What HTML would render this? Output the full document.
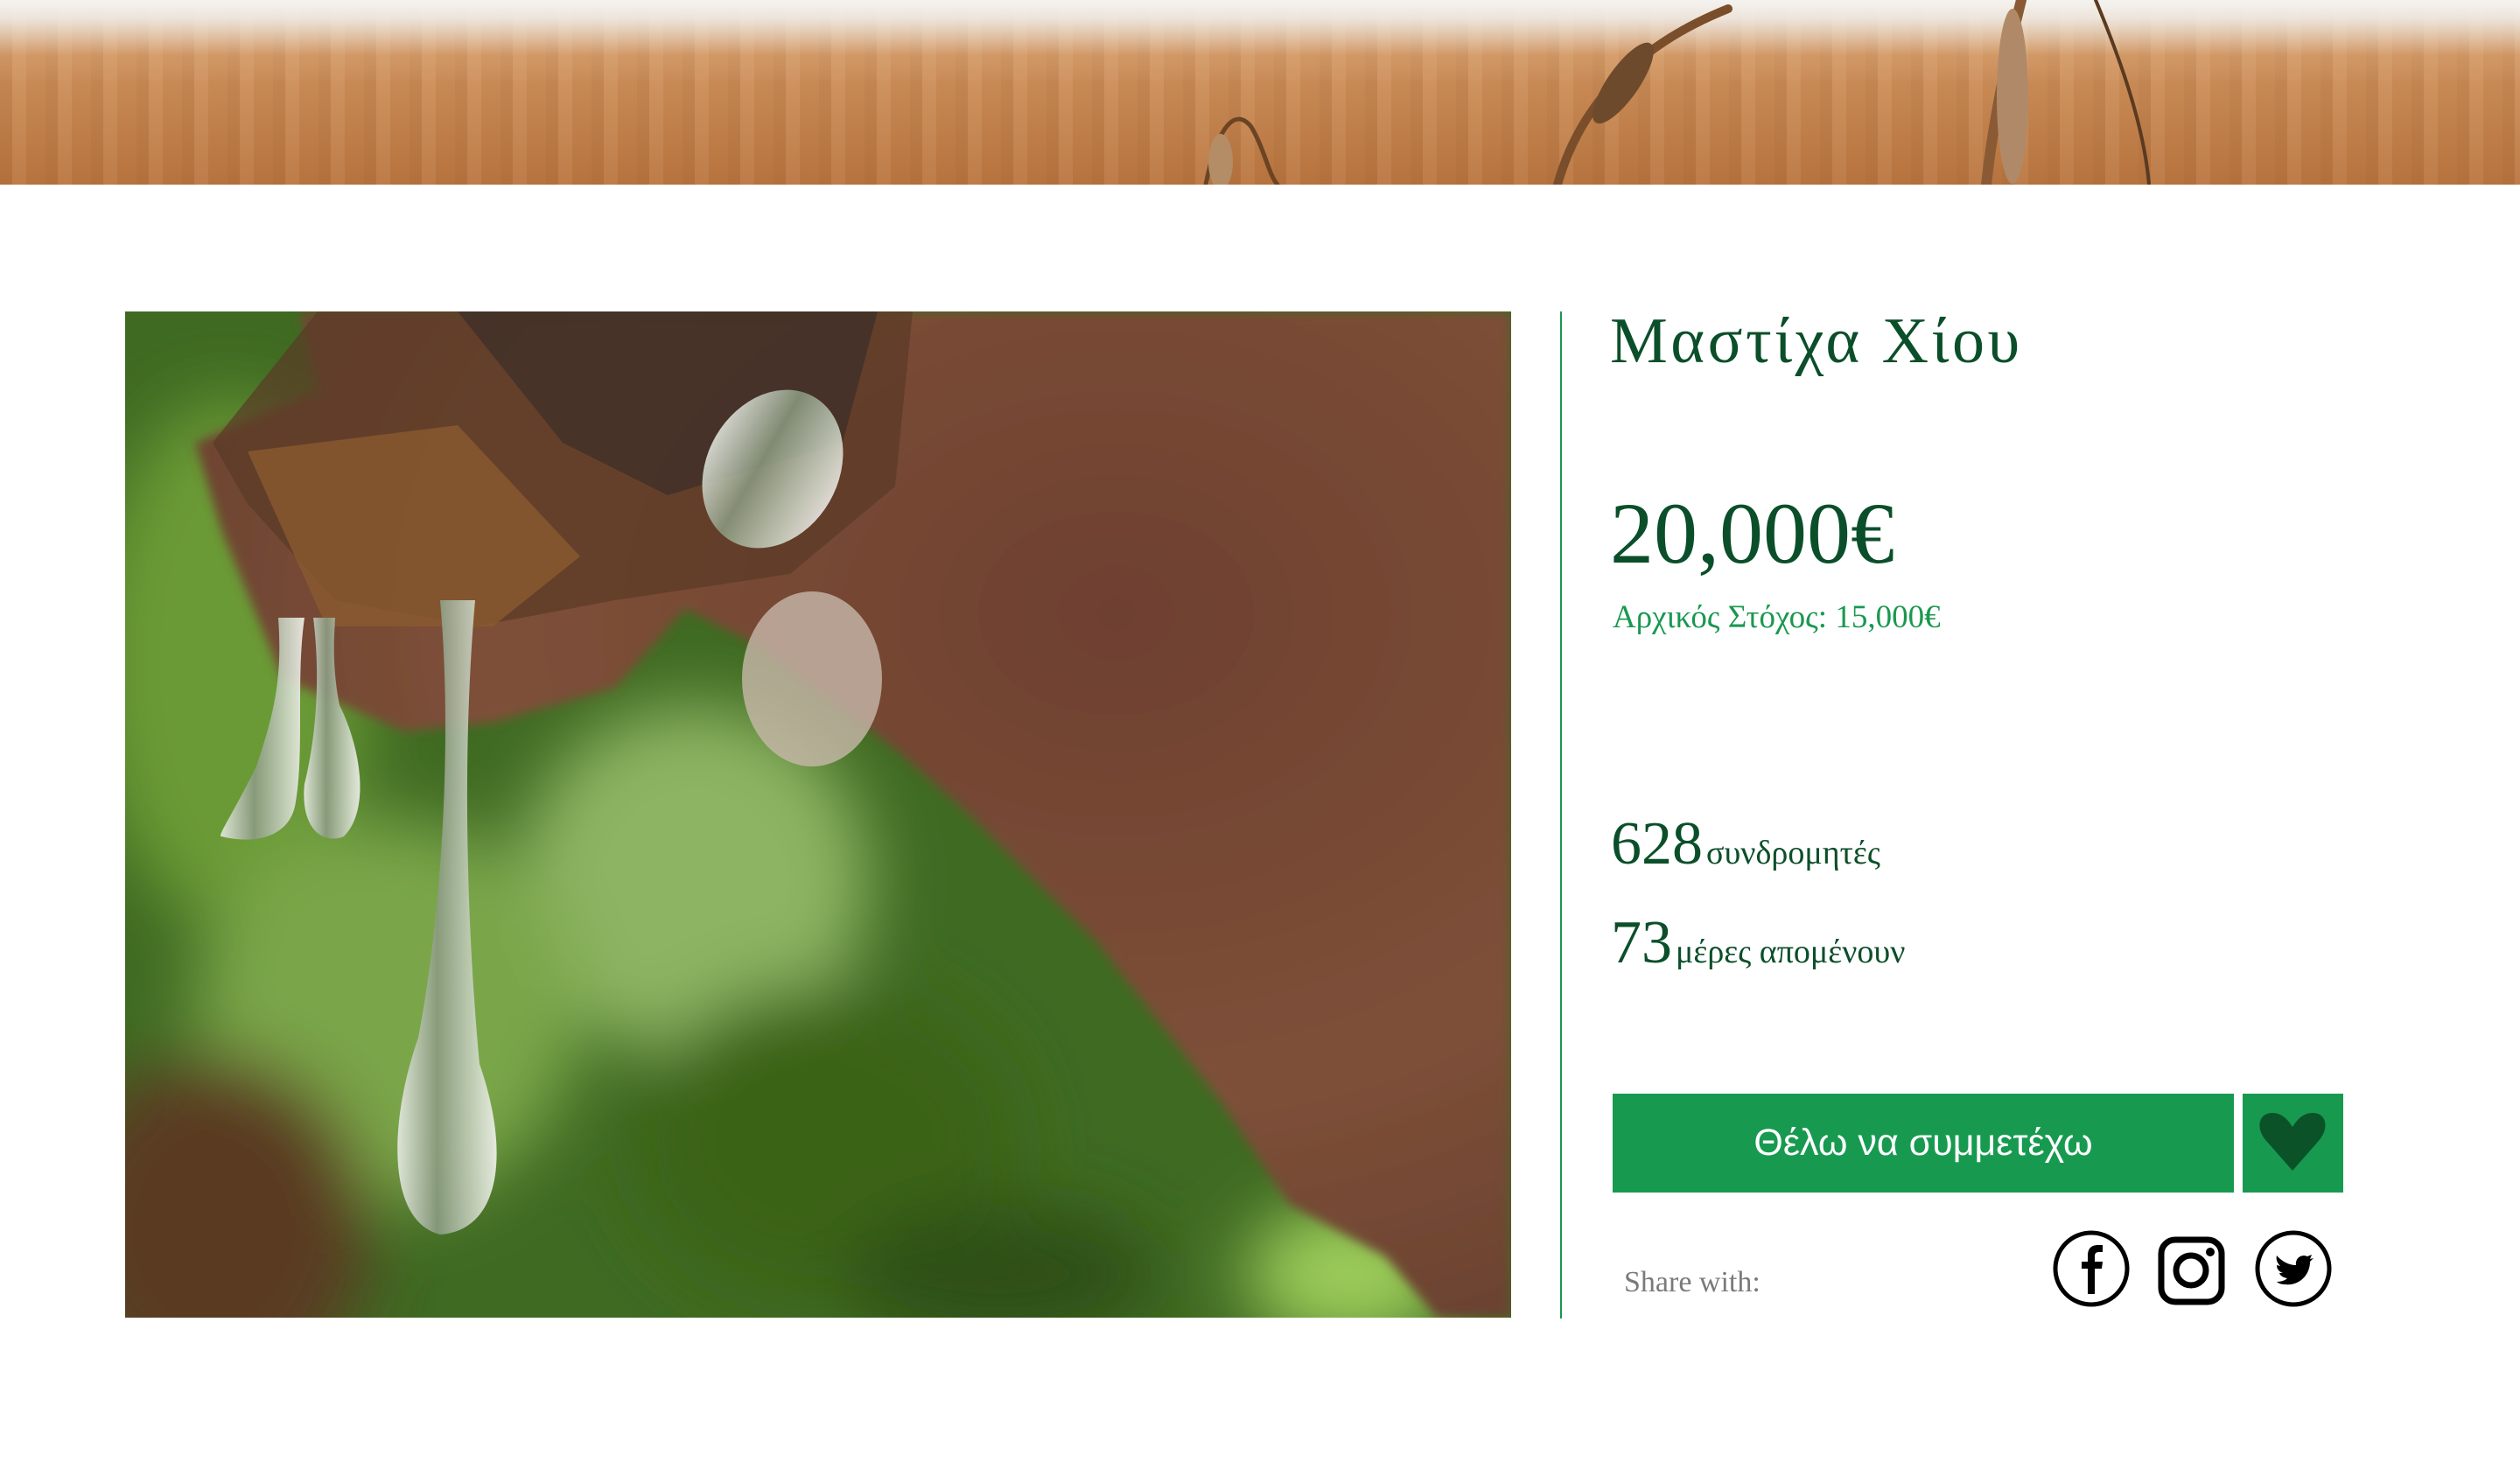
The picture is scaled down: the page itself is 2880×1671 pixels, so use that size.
<!DOCTYPE html>
<html><head><meta charset="utf-8">
<style>
html,body{margin:0;padding:0;background:#fff;}
body{width:2880px;height:1671px;position:relative;overflow:hidden;font-family:"Liberation Serif",serif;}
.abs{position:absolute;}
#wheat{left:0;top:0;width:2880px;height:211px;
background:
 linear-gradient(180deg,rgba(245,243,240,1) 0%,rgba(240,236,230,0.9) 10%,rgba(220,170,120,0.3) 30%,rgba(0,0,0,0) 45%),
 repeating-linear-gradient(90deg,rgba(120,70,30,0.10) 0 14px,rgba(255,230,200,0.07) 14px 30px,rgba(150,90,40,0.06) 30px 52px),
 linear-gradient(180deg,#d9a373 0%,#c98a55 50%,#b8743f 100%);}
.line{left:1783px;top:356px;width:2px;height:1151px;background:#1a9850;}
.t{color:#0b4f2a;white-space:nowrap;}
</style></head><body>
<div id="wheat" class="abs">
<svg width="2880" height="211" style="position:absolute;left:0;top:0">
<g stroke="#6b4424" fill="none" stroke-linecap="round">
<path d="M1378 211 C1390 150 1410 120 1430 145 C1445 170 1450 200 1460 211" stroke-width="5"/>
<path d="M1780 211 C1800 140 1850 60 1975 10" stroke-width="10" stroke="#7a4e2a"/>
<path d="M2270 211 C2280 120 2300 40 2310 0" stroke-width="12" stroke="#8a5a34"/>
<path d="M2395 0 C2420 60 2450 140 2456 211" stroke-width="4" stroke="#5a3a20"/>
</g>
<ellipse cx="1395" cy="185" rx="14" ry="32" fill="#b48c66"/>
<ellipse cx="1855" cy="95" rx="18" ry="55" fill="#6e4a2c" transform="rotate(35 1855 95)"/>
<ellipse cx="2300" cy="110" rx="18" ry="100" fill="#b08a68"/>
</svg>
</div>

<div class="abs" style="left:143px;top:356px;width:1584px;height:1150px;overflow:hidden;">
<svg width="1584" height="1150" viewBox="0 0 1584 1150" preserveAspectRatio="none">
<defs>
<filter id="b1"><feGaussianBlur stdDeviation="40"/></filter>
<filter id="b2"><feGaussianBlur stdDeviation="6"/></filter>
<radialGradient id="bark" cx="0.7" cy="0.3" r="0.8">
<stop offset="0" stop-color="#6e4030"/><stop offset="0.6" stop-color="#7e5038"/><stop offset="1" stop-color="#684030"/></radialGradient>
<linearGradient id="drop" x1="0" y1="0" x2="1" y2="0">
<stop offset="0" stop-color="#e8ece4"/><stop offset="0.4" stop-color="#8a9a80"/><stop offset="0.8" stop-color="#cfd8c8"/><stop offset="1" stop-color="#f2f2ee"/></linearGradient>
</defs>
<rect width="1584" height="1150" fill="#3f6a22"/>
<g filter="url(#b1)">
<ellipse cx="120" cy="400" rx="160" ry="300" fill="#6a9a36"/>
<ellipse cx="650" cy="650" rx="200" ry="200" fill="#8cb462"/>
<ellipse cx="300" cy="800" rx="220" ry="220" fill="#7aa64a"/>
<ellipse cx="100" cy="1050" rx="180" ry="200" fill="#5a3a22"/>
<ellipse cx="800" cy="950" rx="220" ry="180" fill="#3a6418"/>
<ellipse cx="1400" cy="1100" rx="120" ry="80" fill="#9ccc5a"/>
<ellipse cx="1000" cy="1100" rx="180" ry="80" fill="#2f5012"/>
</g>
<path d="M200 0 L1584 0 L1584 1150 L1500 1150 L1440 1080 L1330 1020 L1250 900 L1110 720 L960 570 L880 500 L720 380 L640 340 L560 430 L420 470 L320 480 L180 420 L110 250 L80 150 L220 90 Z" fill="url(#bark)" filter="url(#b2)"/>
<path d="M220 0 L900 0 L880 200 L760 300 L560 330 L400 360 L240 330 L140 220 L100 150 Z" fill="#5a3a26" opacity="0.7"/>
<path d="M380 0 L860 0 L820 150 L620 210 L500 150 Z" fill="#3a2e28" opacity="0.7"/>
<path d="M140 160 L380 130 L520 280 L420 360 L230 360 Z" fill="#8a5a30" opacity="0.8"/>
<ellipse cx="740" cy="180" rx="75" ry="95" fill="url(#drop)" opacity="0.85" transform="rotate(30 740 180)"/>
<ellipse cx="785" cy="420" rx="80" ry="100" fill="#c8b8aa" opacity="0.8"/>
<path d="M175 350 C180 420 170 460 150 520 C120 580 105 600 110 600 C150 610 190 600 195 560 C205 500 195 420 205 350 Z" fill="url(#drop)" opacity="0.9"/>
<path d="M215 350 C225 430 215 500 205 540 C200 590 225 610 250 600 C280 570 270 500 245 450 C235 400 240 360 240 350 Z" fill="url(#drop)" opacity="0.9"/>
<path d="M360 330 C375 500 360 700 335 830 C300 930 300 1040 360 1055 C430 1050 440 960 405 860 C390 700 385 500 400 330 Z" fill="url(#drop)" opacity="0.9"/>
</svg>
</div>

<div class="abs line"></div>

<div class="abs t" style="left:1840px;top:340px;font-size:74px;line-height:100px;letter-spacing:3.5px;">Μαστίχα Χίου</div>
<div class="abs t" style="left:1840px;top:550px;font-size:100px;line-height:120px;">20,000€</div>
<div class="abs" style="left:1843px;top:684px;font-size:37px;line-height:44px;color:#1a9850;white-space:nowrap;">Αρχικός Στόχος: 15,000€</div>
<div class="abs t" style="left:1841px;top:920px;line-height:90px;"><span style="font-size:70px;">628</span> <span style="font-size:38px;">συνδρομητές</span></div>
<div class="abs t" style="left:1841px;top:1033px;line-height:90px;"><span style="font-size:70px;">73</span> <span style="font-size:38px;">μέρες απομένουν</span></div>

<div class="abs" style="left:1843px;top:1250px;width:710px;height:113px;background:#179a50;color:#fff;font-family:'Liberation Sans',sans-serif;font-size:43px;line-height:113px;text-align:center;">Θέλω να συμμετέχω</div>
<div class="abs" style="left:2563px;top:1250px;width:115px;height:113px;background:#179a50;">
<svg width="115" height="113" viewBox="0 0 115 113"><path d="M57 88 L28 55 C14 40 18 22 34 22 C45 22 52 30 57 38 C62 30 69 22 80 22 C96 22 100 40 86 55 Z" fill="#0b5228"/></svg>
</div>

<div class="abs" style="left:1856px;top:1444px;font-size:34px;line-height:44px;color:#7a7a7a;">Share with:</div>

<svg class="abs" style="left:2340px;top:1400px" width="340" height="100" viewBox="0 0 340 100">
<circle cx="50" cy="50" r="41" fill="none" stroke="#000" stroke-width="5"/>
<path d="M46 79 V50 H39 V42 H46 V35 C46 27 50 23 58 23 H63 V31 H59 C55 31 54 33 54 36 V42 H63 L62 50 H54 V79 Z" fill="#000"/>
<rect x="130" y="17" width="69" height="71" rx="16" fill="none" stroke="#000" stroke-width="7"/>
<circle cx="164" cy="52" r="17" fill="none" stroke="#000" stroke-width="7"/>
<circle cx="186" cy="31" r="5" fill="#000"/>
<circle cx="281" cy="50" r="41" fill="none" stroke="#000" stroke-width="5"/>
<path d="M262 35 C268 42 276 46 284 46 C283 38 290 33 297 36 L302 34 L300 39 L304 38 L300 42 C300 58 287 70 271 68 C266 68 263 66 262 65 C268 65 272 63 274 61 C269 60 266 58 265 55 L269 55 C264 53 262 50 262 46 L266 47 C262 43 261 39 262 35 Z" fill="#000"/>
</svg>
</body></html>
